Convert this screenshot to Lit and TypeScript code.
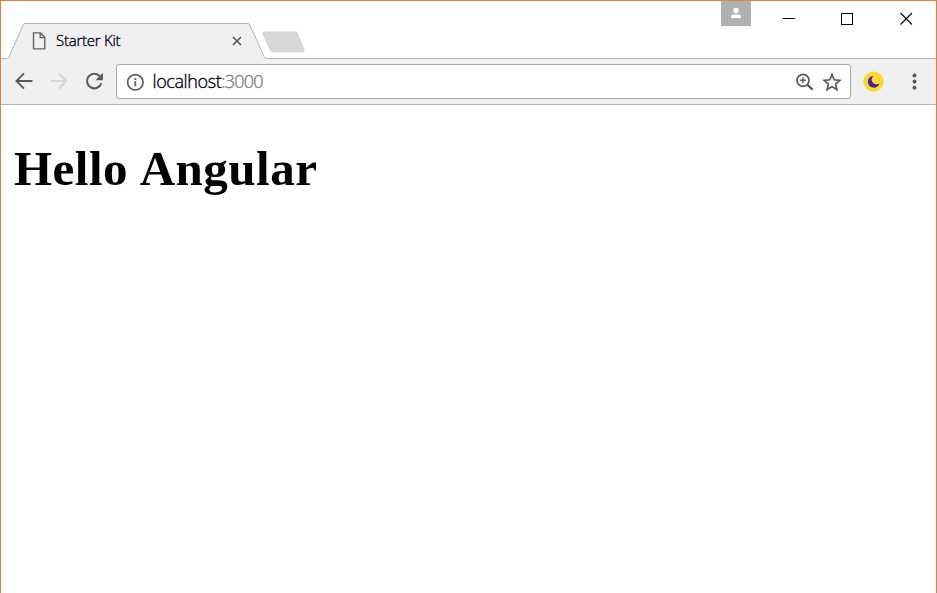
import { LitElement, html, css } from "lit";
import { customElement } from "lit/decorators.js";

@customElement("tab-strip")
class TabStrip extends LitElement {
  static styles = css`
    :host { display: flex; height: 58px; box-sizing: border-box; position: relative; justify-content: space-between; }
    .shape { position: absolute; left: 0; top: 0; pointer-events: none; }
    .tab { position: relative; display: flex; align-items: center; width: 212px; height: 36px; margin: 22px 0 0 30px; }
    .title { flex: 1; margin: 0 0 2px 10px; font: 300 15px/20px "Open Sans", sans-serif; letter-spacing: -0.25px; color: #000018; white-space: nowrap; -webkit-text-stroke: .35px #000018; }
    .controls { display: flex; align-items: flex-start; height: 40px; position: relative; }
    .user { width: 30px; height: 25px; background: #b1b1b1; }
    .user svg, .controls > svg { display: block; }
    .min { margin: 11px 0 0 31px; }
    .max { margin: 11px 0 0 46px; }
    .close { margin: 11px 23px 0 46px; }
  `;
  render() {
    return html`
      <svg class="shape" width="935" height="58" viewBox="1 1 935 58">
        <path d="M1 58.5H6.5C8 58.5 8.6 57.8 9.2 56.5L23.2 24.8Q23.8 23.5 25 23.5H248Q249.2 23.5 249.8 24.8L264 56.5Q265 58.5 266.5 58.5H936V60H1Z" fill="#f0f0f0"/>
        <path d="M1 58.5H6.5C8 58.5 8.6 57.8 9.2 56.5L23.2 24.8Q23.8 23.5 25 23.5H248Q249.2 23.5 249.8 24.8L264 56.5Q265 58.5 266.5 58.5H936" fill="none" stroke="#b3b3b3"/>
        <path d="M264.5 31.8H294.7Q296.7 31.8 297.5 33.5L304.2 49.5Q304.7 52 302.7 52H273Q271 52 270 50L262.8 34Q262 31.8 264.5 31.8Z" fill="#d8d8d8" stroke="#cfcfcf" stroke-width=".6"/>
      </svg>
      <div class="tab">
        <svg width="15" height="18" viewBox="0 0 15 18"><path d="M2.5 .9H9.600L13.800 5.300V16.900H2.500ZM9.200 1V5.600H13.600" fill="none" stroke="#626262" stroke-width="1.4"/></svg>
        <span class="title">Starter Kit</span>
        <svg width="12" height="12" viewBox="0 0 12 12"><path d="M2 2L10 10M10 2L2 10" stroke="#505050" stroke-width="1.5"/></svg>
      </div>
      <div class="controls">
        <div class="user"><svg width="30" height="25" viewBox="0 0 30 25"><circle cx="15" cy="9.5" r="2.7" fill="#fff"/><path d="M10 17V15.7Q10 13.3 15 13.3T20 15.7V17Z" fill="#fff"/></svg></div>
        <svg class="min" width="13" height="13"><path d="M1 6.5H13" stroke="#000"/></svg>
        <svg class="max" width="13" height="13"><rect x=".5" y="1.5" width="11" height="11" fill="none" stroke="#000"/></svg>
        <svg class="close" width="13" height="13"><path d="M.5 1L12 12.5M12 1L.5 12.5" stroke="#000" stroke-width="1.1"/></svg>
      </div>`;
  }
}

@customElement("tool-bar")
class ToolBar extends LitElement {
  static styles = css`
    :host { display: flex; align-items: center; height: 46px; box-sizing: border-box; background: #f0f0f0; border-bottom: 1px solid #b3b3b3; padding: 0 14px 0 13px; }
    svg { display: block; flex: none; }
    .nav { margin-bottom: 2px; }
    .fwd { margin-left: 15px; }
    .reload { margin-left: 15px; }
    .omnibox { display: flex; align-items: center; flex: 1; height: 35px; box-sizing: border-box; margin: 0 12px 0 12px; background: #fff; border: 1px solid #a9a9a9; border-radius: 3px; padding: 0 8px 0 8px; }
    .url { flex: 1; margin: 0 0 2px 7.5px; font: 300 18px/24px "Open Sans", sans-serif; letter-spacing: -0.4px; color: #000010; white-space: nowrap; -webkit-text-stroke: .35px currentColor; }
    .port { color: #808080; letter-spacing: -0.8px; }
    .star { margin-left: 8px; }
    .menu { margin-left: 21px; }
  `;
  render() {
    return html`
      <svg class="nav" width="20" height="20" viewBox="0 0 20 20"><path d="M18.5 10H2.500M10 2.300L2.500 10L10 17.700" fill="none" stroke="#5a5a5a" stroke-width="1.9"/></svg>
      <svg class="nav fwd" width="20" height="20" viewBox="0 0 20 20"><path d="M2 10H17.500M10 2.300L17.500 10L10 17.700" fill="none" stroke="#d4d4d4" stroke-width="1.9"/></svg>
      <svg class="nav reload" width="20" height="20" viewBox="0 0 20 20"><path d="M15.600 5A7.300 7.300 0 1 0 17.300 12.200" fill="none" stroke="#5a5a5a" stroke-width="2.100"/><path d="M18.900 1.800V9.200H11.500Z" fill="#5a5a5a"/></svg>
      <div class="omnibox">
        <svg width="20" height="20" viewBox="0 0 20 20"><circle cx="10.300" cy="10.300" r="7.700" fill="none" stroke="#5a5a5a" stroke-width="1.700"/><path d="M10.300 9.300V14.300M10.300 6.300V8" stroke="#5a5a5a" stroke-width="1.800"/></svg>
        <span class="url">localhost<span class="port">:3000</span></span>
        <svg width="19" height="20" viewBox="0 0 19 20"><circle cx="8" cy="8.300" r="6" fill="none" stroke="#5a5a5a" stroke-width="1.700"/><path d="M12.300 12.600L17.500 17.800" stroke="#5a5a5a" stroke-width="2.200"/><path d="M5 8.300H11M8 5.300V11.300" stroke="#5a5a5a" stroke-width="1.400"/></svg>
        <svg class="star" width="20" height="20" viewBox="0 0 20 20"><path d="M10 2.500L12.200 7.800L17.900 8.300L13.600 12L14.900 17.600L10 14.600L5.100 17.600L6.400 12L2.100 8.300L7.800 7.800Z" fill="none" stroke="#5a5a5a" stroke-width="1.700"/></svg>
      </div>
      <svg width="22" height="22" viewBox="0 0 22 22"><circle cx="10.500" cy="10.600" r="10.200" fill="#fdd835"/><path d="M10.500 4.700A6 6 0 1 0 16.600 12.300A4.600 4.600 0 0 1 10.500 4.700Z" fill="#45278d"/></svg>
      <svg class="menu" width="16" height="20" viewBox="0 0 16 20"><g fill="#5a5a5a"><circle cx="8.500" cy="3.600" r="2"/><circle cx="8.500" cy="9.600" r="2"/><circle cx="8.500" cy="15.700" r="2"/></g></svg>`;
  }
}

@customElement("app-root")
class AppRoot extends LitElement {
  static styles = css`
    :host { display: block; box-sizing: border-box; height: 593px; overflow: hidden; background: #fff; border: 1px solid #d8834c; border-bottom: 0; }
    h1 { margin: 36px 0 0 13px; font: bold 49px/56px "Liberation Serif", serif; letter-spacing: .5px; word-spacing: 1.5px; color: #000; }
  `;
  render() {
    return html`<tab-strip></tab-strip><tool-bar></tool-bar><h1>Hello Angular</h1>`;
  }
}
